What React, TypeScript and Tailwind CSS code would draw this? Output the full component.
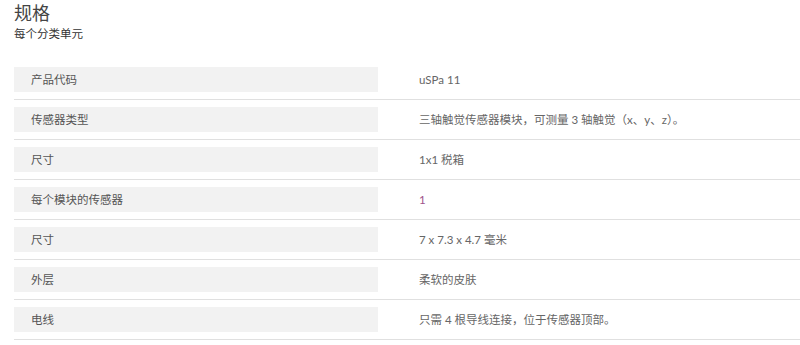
import React from "react";

const specs: { label: string; value: string; accent?: boolean }[] = [
  { label: "产品代码", value: "uSPa 11" },
  { label: "传感器类型", value: "三轴触觉传感器模块，可测量 3 轴触觉（x、y、z）。" },
  { label: "尺寸", value: "1x1 税箱" },
  { label: "每个模块的传感器", value: "1", accent: true },
  { label: "尺寸", value: "7 x 7.3 x 4.7 毫米" },
  { label: "外层", value: "柔软的皮肤" },
  { label: "电线", value: "只需 4 根导线连接，位于传感器顶部。" },
];

export default function App() {
  return (
    <div
      className="h-[345px] w-[800px] overflow-hidden bg-white pl-[14px]"
      style={{ fontFamily: '"Lato", "Noto Sans CJK SC", sans-serif' }}
    >
      <h2 className="pt-[1px] text-[18px] leading-[24px] text-[#444]">规格</h2>
      <p className="mt-[2px] text-[11.5px] leading-[14px] text-[#333]">每个分类单元</p>

      <div className="mt-[19px]">
        {specs.map((row, i) => (
          <div key={i} className="flex items-center border-b border-[#e0e0e0] py-[7px]">
            <div className="flex h-[25px] w-[364px] shrink-0 items-center bg-[#f2f2f2] pl-[17px] text-[11.5px] text-[#555]">
              {row.label}
            </div>
            <div
              className={
                row.accent
                  ? "pl-[41px] text-[11.5px] text-[#a0548a]"
                  : "pl-[41px] text-[11.5px] text-[#666]"
              }
            >
              {row.value}
            </div>
          </div>
        ))}
      </div>
    </div>
  );
}
